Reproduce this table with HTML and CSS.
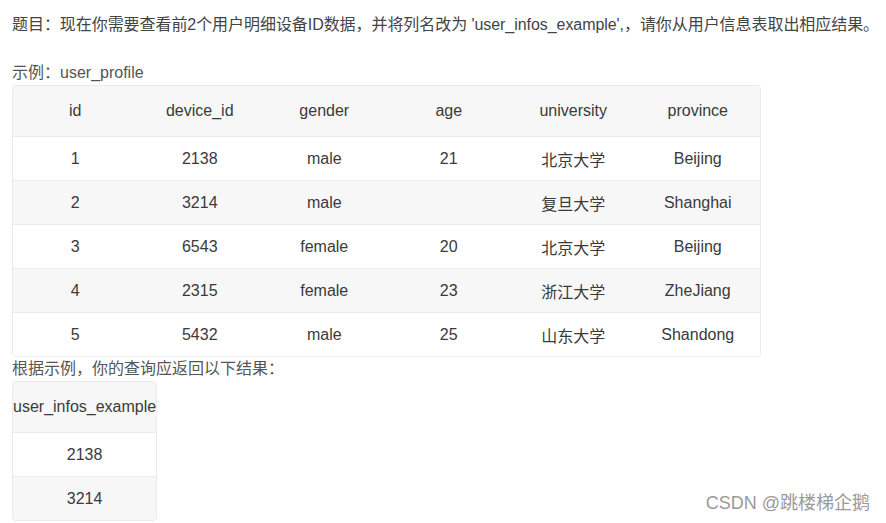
FILE: index.html
```html
<!DOCTYPE html>
<html lang="zh">
<head>
<meta charset="utf-8">
<link rel="stylesheet" href="styles.css">
</head>
<body>
<div class="page">
  <p class="title">题目：现在你需要查看前2个用户明细设备ID数据，并将列名改为 'user_infos_example',，请你从用户信息表取出相应结果。</p>
  <p class="line">示例：user_profile</p>
  <table class="grid wide">
    <thead>
      <tr><th>id</th><th>device_id</th><th>gender</th><th>age</th><th>university</th><th>province</th></tr>
    </thead>
    <tbody>
      <tr><td>1</td><td>2138</td><td>male</td><td>21</td><td>北京大学</td><td>Beijing</td></tr>
      <tr><td>2</td><td>3214</td><td>male</td><td></td><td>复旦大学</td><td>Shanghai</td></tr>
      <tr><td>3</td><td>6543</td><td>female</td><td>20</td><td>北京大学</td><td>Beijing</td></tr>
      <tr><td>4</td><td>2315</td><td>female</td><td>23</td><td>浙江大学</td><td>ZheJiang</td></tr>
      <tr><td>5</td><td>5432</td><td>male</td><td>25</td><td>山东大学</td><td>Shandong</td></tr>
    </tbody>
  </table>
  <p class="line">根据示例，你的查询应返回以下结果：</p>
  <table class="grid narrow">
    <thead>
      <tr><th>user_infos_example</th></tr>
    </thead>
    <tbody>
      <tr><td>2138</td></tr>
      <tr><td>3214</td></tr>
    </tbody>
  </table>
</div>
<div class="watermark">CSDN @跳楼梯企鹅</div>
</body>
</html>
```
FILE: styles.css
```css
html, body {
  margin: 0;
  padding: 0;
  background: #fff;
}
body {
  font-family: "Liberation Sans", Arial, "Noto Sans CJK SC", sans-serif;
  font-size: 16px;
  color: #333;
  width: 886px;
  height: 523px;
  overflow: hidden;
  position: relative;
}
.page {
  padding: 13px 12px 0 12px;
}
.title {
  margin: 0 0 24px 0;
  line-height: 24px;
  white-space: nowrap;
  letter-spacing: -0.06px;
  color: #444;
}
.line {
  margin: 0;
  line-height: 24px;
  color: #555;
}
.grid {
  border-collapse: separate;
  border-spacing: 0;
  border: 1px solid #ebebeb;
  border-radius: 4px;
  overflow: hidden;
  font-size: 16px;
  color: #3a3a3a;
}
.wide {
  width: 749px;
  table-layout: fixed;
}
.grid th {
  font-weight: normal;
  height: 50px;
  padding: 0;
  background: #f7f7f7;
  text-align: center;
  vertical-align: middle;
}
.grid td {
  height: 43px;
  padding: 0;
  border-top: 1px solid #ebebeb;
  text-align: center;
  vertical-align: middle;
  background: #fff;
}
.grid tbody tr:nth-child(even) td {
  background: #f7f7f7;
}
.watermark {
  position: absolute;
  right: 16px;
  top: 491px;
  font-size: 18px;
  line-height: 24px;
  color: #9a9a9a;
  text-shadow: 0 0 1px #fff;
  white-space: nowrap;
}
```
